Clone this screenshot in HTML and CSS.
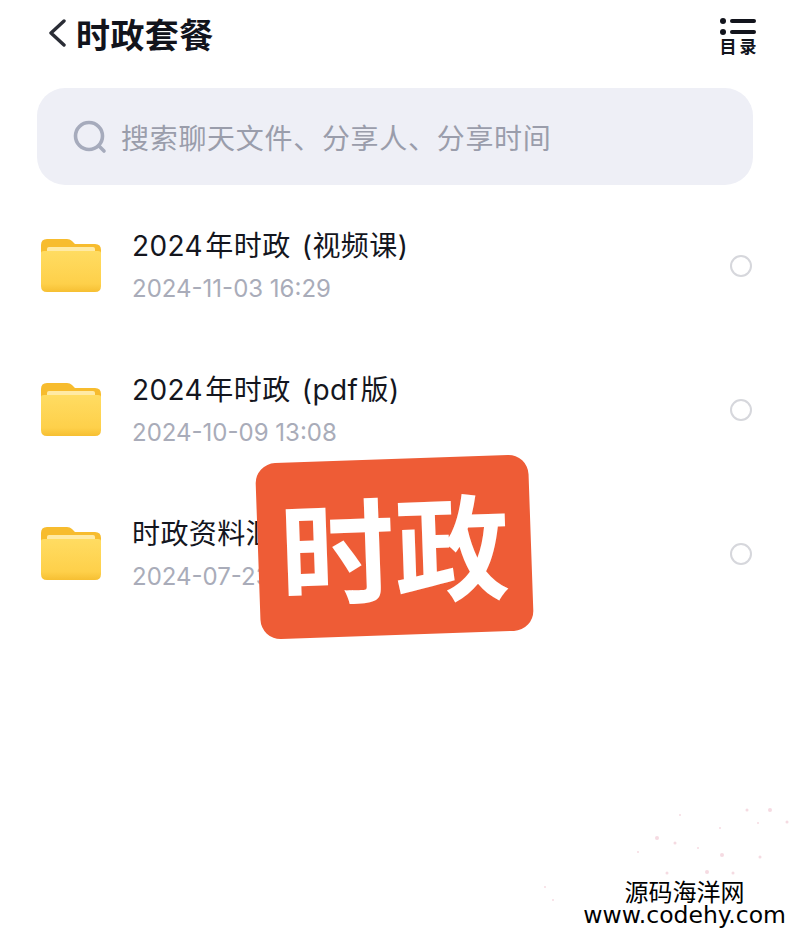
FILE: index.html
```html
<!DOCTYPE html>
<html lang="zh-CN">

<head>
    <meta charset="UTF-8">
    <meta name="viewport" content="width=device-width, initial-scale=1.0">
    <title>时政套餐</title>
    <link rel="stylesheet" href="styles.css">
</head>

<body>
    <div class="page">
        <div class="header">
            <svg class="back-icon" width="20" height="28" viewBox="0 0 20 28">
                <path d="M17 2 L4 14 L17 26" fill="none" stroke="#2a2d36" stroke-width="3.4" stroke-linecap="round" stroke-linejoin="round" />
            </svg>
            <div class="title">时政套餐</div>
            <div class="menu">
                <svg width="38" height="20" viewBox="0 0 38 20">
                    <circle cx="4" cy="4" r="3" fill="#12141c" />
                    <circle cx="4" cy="15" r="3" fill="#12141c" />
                    <rect x="11" y="2" width="26" height="4" rx="2" fill="#12141c" />
                    <rect x="11" y="13" width="26" height="4" rx="2" fill="#12141c" />
                </svg>
                <div class="menu-text">目录</div>
            </div>
        </div>

        <div class="search">
            <svg width="34" height="34" viewBox="0 0 34 34">
                <circle cx="16" cy="16" r="13.5" fill="none" stroke="#a6abbc" stroke-width="3.6" />
                <path d="M26 26 L31 31" stroke="#a6abbc" stroke-width="3.6" stroke-linecap="round" />
            </svg>
            <div class="search-text">搜索聊天文件、分享人、分享时间</div>
        </div>

        <div class="file-list">
            <div class="file-row">
                <svg class="folder" width="60" height="54" viewBox="0 0 60 54">
                    <use href="#folder-shape" />
                </svg>
                <div class="file-info">
                    <div class="file-name">2024 年时政 <span class="file-note">(视频课)</span></div>
                    <div class="file-date">2024-11-03 16:29</div>
                </div>
                <div class="radio"></div>
            </div>
            <div class="file-row">
                <svg class="folder" width="60" height="54" viewBox="0 0 60 54">
                    <use href="#folder-shape" />
                </svg>
                <div class="file-info">
                    <div class="file-name">2024 年时政 <span class="file-note">(pdf 版)</span></div>
                    <div class="file-date">2024-10-09 13:08</div>
                </div>
                <div class="radio"></div>
            </div>
            <div class="file-row">
                <svg class="folder" width="60" height="54" viewBox="0 0 60 54">
                    <use href="#folder-shape" />
                </svg>
                <div class="file-info">
                    <div class="file-name">时政资料汇总</div>
                    <div class="file-date">2024-07-23 10:15</div>
                </div>
                <div class="radio"></div>
            </div>
        </div>
    </div>

    <!-- shared folder drawing -->
    <svg class="defs" width="0" height="0">
        <defs>
            <linearGradient id="folder-body" x1="0" y1="0" x2="0" y2="1">
                <stop offset="0" stop-color="#ffdc62" />
                <stop offset="0.8" stop-color="#fed04a" />
                <stop offset="1" stop-color="#f6bf32" />
            </linearGradient>
            <g id="folder-shape">
                <path d="M0 6 Q0 0 6 0 H26 Q29 0 31 2 L34 5 H54 Q60 5 60 11 V24 H0 Z" fill="#f7bc2e" />
                <rect x="6" y="8" width="48" height="6" rx="2" fill="#ffeaa4" />
                <path d="M0 14 Q0 12 3 12 H57 Q60 12 60 14 V47 Q60 53 54 53 H6 Q0 53 0 47 Z" fill="url(#folder-body)" />
            </g>
        </defs>
    </svg>

    <div class="stamp">时政</div>

    <svg class="speckle" width="270" height="125" viewBox="0 0 270 125">
        <g fill="#f0c4cf" opacity="0.6">
            <circle cx="137" cy="38" r="2" />
            <circle cx="155" cy="43" r="1.5" />
            <circle cx="202" cy="55" r="2" />
            <circle cx="240" cy="57" r="1.5" />
            <circle cx="250" cy="10" r="2" />
            <circle cx="227" cy="10" r="1.5" />
            <circle cx="267" cy="22" r="1.5" />
            <circle cx="147" cy="73" r="1.5" />
            <circle cx="187" cy="72" r="2" />
            <circle cx="213" cy="73" r="1.5" />
            <circle cx="33" cy="100" r="1" />
            <circle cx="25" cy="87" r="1" />
            <circle cx="118" cy="52" r="1" />
            <circle cx="200" cy="28" r="1" />
            <circle cx="160" cy="15" r="1" />
            <circle cx="178" cy="48" r="1" />
            <circle cx="238" cy="23" r="1" />
        </g>
    </svg>

    <div class="watermark">
        <div class="watermark-cn">源码海洋网</div>
        <div class="watermark-url">www.codehy.com</div>
    </div>
</body>

</html>
```

FILE: styles.css
```css
body {
    font-family: "Noto Sans CJK SC", "Noto Sans", sans-serif;
    background-color: #ffffff;
    margin: 0;
    padding: 0;
    width: 790px;
    height: 935px;
    overflow: hidden;
    position: relative;
}

.page {
    padding: 4px 37px 0;
}

.header {
    display: flex;
    align-items: center;
    height: 58px;
    padding: 0 0 0 10px;
}

.back-icon {
    margin-right: 9px;
}

.title {
    font-size: 34px;
    font-weight: 700;
    color: #12141c;
    flex: 1;
    letter-spacing: 0.4px;
}

.menu {
    display: flex;
    flex-direction: column;
    align-items: center;
    margin-right: -4px;
    margin-top: 6px;
}

.menu-text {
    font-size: 17px;
    line-height: 18px;
    font-weight: 700;
    letter-spacing: 3px;
    margin-right: -3px;
    color: #12141c;
}

.search {
    display: flex;
    align-items: center;
    gap: 14px;
    height: 97px;
    margin-top: 26px;
    padding-left: 36px;
    background-color: #eeeff6;
    border-radius: 28px;
}

.search-text {
    font-size: 28px;
    letter-spacing: 0.7px;
    color: #9a9dab;
}

.file-list {
    display: flex;
    flex-direction: column;
    margin-top: 9px;
}

.file-row {
    display: flex;
    align-items: center;
    height: 144px;
    padding-left: 4px;
}

.folder {
    flex-shrink: 0;
    margin-right: 31px;
}

.file-info {
    flex: 1;
}

.file-name {
    font-family: "Inter", "Noto Sans CJK SC", sans-serif;
    font-size: 28px;
    line-height: 40px;
    letter-spacing: 0.4px;
    word-spacing: -6px;
    color: #14161e;
}

.file-note {
    margin-left: 9px;
}

.file-date {
    font-family: "Inter", "Noto Sans CJK SC", sans-serif;
    font-size: 24px;
    line-height: 36px;
    margin-top: 5px;
    color: #a9acb9;
}

.radio {
    width: 18px;
    height: 18px;
    border: 2.5px solid #d6d7dc;
    border-radius: 50%;
    margin-right: 1px;
}

.defs {
    position: absolute;
}

/* tilted label over the list */
.stamp {
    position: absolute;
    left: 258px;
    top: 459px;
    width: 273px;
    height: 176px;
    padding-bottom: 6px;
    box-sizing: border-box;
    display: flex;
    align-items: center;
    justify-content: center;
    background-color: #ee5c36;
    border-radius: 20px;
    transform: rotate(-2deg);
    color: #ffffff;
    font-size: 115px;
    font-weight: 700;
    line-height: 1;
}

.speckle {
    position: absolute;
    left: 520px;
    top: 800px;
}

.watermark {
    position: absolute;
    right: 4px;
    bottom: 8px;
    display: flex;
    flex-direction: column;
    align-items: center;
    color: #000000;
    line-height: 1;
}

.watermark-cn {
    font-size: 24px;
    line-height: 24px;
}

.watermark-url {
    font-family: "DejaVu Sans", sans-serif;
    font-size: 23.5px;
    line-height: 24px;
}
```
